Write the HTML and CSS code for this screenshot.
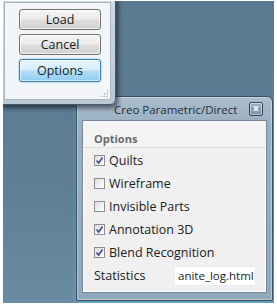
FILE: index.html
```html
<!DOCTYPE html>
<html>
<head>
<meta charset="utf-8">
<link rel="stylesheet" href="styles.css">
</head>
<body>
<div class="desktop">
  <div class="dialog">
    <div class="titlebar">
      <span class="title">Creo Parametric/Direct</span>
      <span class="close">x</span>
    </div>
    <div class="panel">
      <div class="panel-head">Options</div>
      <div class="rows">
        <div class="row"><span class="cb checked"><svg viewBox="0 0 9 9"><path d="M1.5 4.5 L3.6 7 L7.5 1.5" /></svg></span>Quilts</div>
        <div class="row"><span class="cb"></span>Wireframe</div>
        <div class="row"><span class="cb"></span>Invisible Parts</div>
        <div class="row"><span class="cb checked"><svg viewBox="0 0 9 9"><path d="M1.5 4.5 L3.6 7 L7.5 1.5" /></svg></span>Annotation 3D</div>
        <div class="row"><span class="cb checked"><svg viewBox="0 0 9 9"><path d="M1.5 4.5 L3.6 7 L7.5 1.5" /></svg></span>Blend Recognition</div>
        <div class="row stat"><span class="label">Statistics</span><span class="input">anite_log.html</span></div>
      </div>
    </div>
  </div>
  <div class="win-main">
    <div class="win-body">
      <button class="btn">Load</button>
      <button class="btn">Cancel</button>
      <button class="btn btn-primary">Options</button>
      <span class="grip"></span>
    </div>
  </div>
</div>
</body>
</html>
```
FILE: styles.css
```css
html, body {
  margin: 0;
  padding: 0;
  background: #ffffff;
}
body {
  font-family: "Open Sans", "Noto Sans", sans-serif;
  font-size: 12px;
  color: #1b1b1b;
}
.desktop {
  position: relative;
  width: 271px;
  height: 302px;
  margin: 1px 0 0 3px;
  background: linear-gradient(180deg, #5a7a91 0%, #5d7e95 60%, #6a8ca2 100%);
  overflow: hidden;
}
.win-main {
  position: absolute;
  left: -4px;
  top: -5px;
  width: 117px;
  height: 109px;
  box-sizing: border-box;
  padding: 5px 4px 4px 4px;
  background: linear-gradient(180deg, #cfdbe5, #b9c9d6);
  border: 1px solid #46596a;
  border-radius: 0 0 6px 0;
  box-shadow: 2px 3px 5px rgba(0, 0, 0, 0.55);
  z-index: 2;
}
.win-body {
  position: relative;
  height: 100%;
  box-sizing: border-box;
  background: #f3f5f8;
  border: 1px solid #a8b6c2;
  padding: 6px 9px 0 14px;
  display: flex;
  flex-direction: column;
  gap: 4px;
}
.btn {
  height: 21px;
  font: inherit;
  font-size: 12.5px;
  color: #1b1b1b;
  border: 1px solid #707070;
  border-radius: 3px;
  background: linear-gradient(180deg, #f4f4f4 0%, #ebebeb 48%, #dddddd 52%, #d2d2d2 100%);
  box-shadow: inset 0 0 0 1px rgba(255, 255, 255, 0.7);
  padding: 0;
  line-height: 18px;
}
.btn-primary {
  height: 23px;
  border-color: #3c7fb1;
  background: linear-gradient(180deg, #e6f5fd 0%, #d6eefc 48%, #b3def6 52%, #8fcdf0 100%);
  box-shadow: inset 0 0 0 1px rgba(255, 255, 255, 0.6), 0 0 2px #5ab4e6;
}
.grip {
  position: absolute;
  right: 2px;
  bottom: 2px;
  width: 8px;
  height: 8px;
  background:
    radial-gradient(circle, #b8bec4 0.8px, transparent 1.2px) 0 0 / 3px 3px;
  clip-path: polygon(100% 0, 100% 100%, 0 100%);
}
.dialog {
  position: absolute;
  left: 73px;
  top: 95px;
  width: 197px;
  height: 205px;
  box-sizing: border-box;
  border: 1px solid #3a4e5f;
  border-radius: 6px 6px 2px 2px;
  background: linear-gradient(180deg, #aabdcc 0%, #98afc1 15%, #90a8bb 100%);
  box-shadow: 0 0 0 1px rgba(255, 255, 255, 0.35) inset, 0 2px 4px rgba(80, 200, 230, 0.5);
  display: flex;
  flex-direction: column;
  padding: 0 5px 7px 5px;
  z-index: 1;
}
.titlebar {
  height: 23px;
  display: flex;
  align-items: center;
  justify-content: space-between;
  flex: none;
}
.title {
  margin-left: 32px;
  font-size: 11.5px;
  color: #1d2f3d;
  padding-top: 1px;
}
.close {
  width: 14px;
  height: 14px;
  margin-right: 4px;
  box-sizing: border-box;
  border: 1px solid #37495a;
  border-radius: 2px;
  background: linear-gradient(180deg, #9fb3c3, #7990a4);
  box-shadow: inset 0 0 0 1px rgba(255, 255, 255, 0.45);
  color: #ffffff;
  font-size: 9px;
  font-weight: bold;
  line-height: 11px;
  text-align: center;
  font-family: "DejaVu Sans", sans-serif;
}
.panel {
  flex: 1;
  background: #f0f0f0;
  border: 1px solid #76889a;
  box-shadow: inset 0 0 0 1px #ffffff;
  display: flex;
  flex-direction: column;
}
.panel-head {
  height: 27px;
  box-sizing: border-box;
  padding: 11px 0 0 11px;
  font-weight: bold;
  font-size: 11px;
  color: #6a6a6a;
  background: #f4f4f4;
  border-bottom: 1px solid #dedede;
  line-height: 14px;
}
.rows {
  padding-top: 1px;
  display: flex;
  flex-direction: column;
}
.row {
  height: 23px;
  display: flex;
  align-items: center;
  padding-left: 11px;
  white-space: nowrap;
  font-size: 12.5px;
}
.cb {
  width: 11px;
  height: 11px;
  box-sizing: border-box;
  border: 1px solid #8e8f8f;
  background: linear-gradient(135deg, #dcdcdc 0%, #f2f2f2 60%, #ffffff 100%);
  margin-right: 4px;
  display: flex;
  align-items: center;
  justify-content: center;
}
.cb svg {
  width: 9px;
  height: 9px;
}
.cb svg path {
  fill: none;
  stroke: #4a4f9c;
  stroke-width: 1.7;
}
.stat .label {
  width: 80px;
}
.input {
  width: 82px;
  height: 20px;
  box-sizing: border-box;
  background: #ffffff;
  border: 1px solid #ececec;
  padding-left: 3px;
  font-size: 11.5px;
  line-height: 18px;
  overflow: hidden;
}
```
